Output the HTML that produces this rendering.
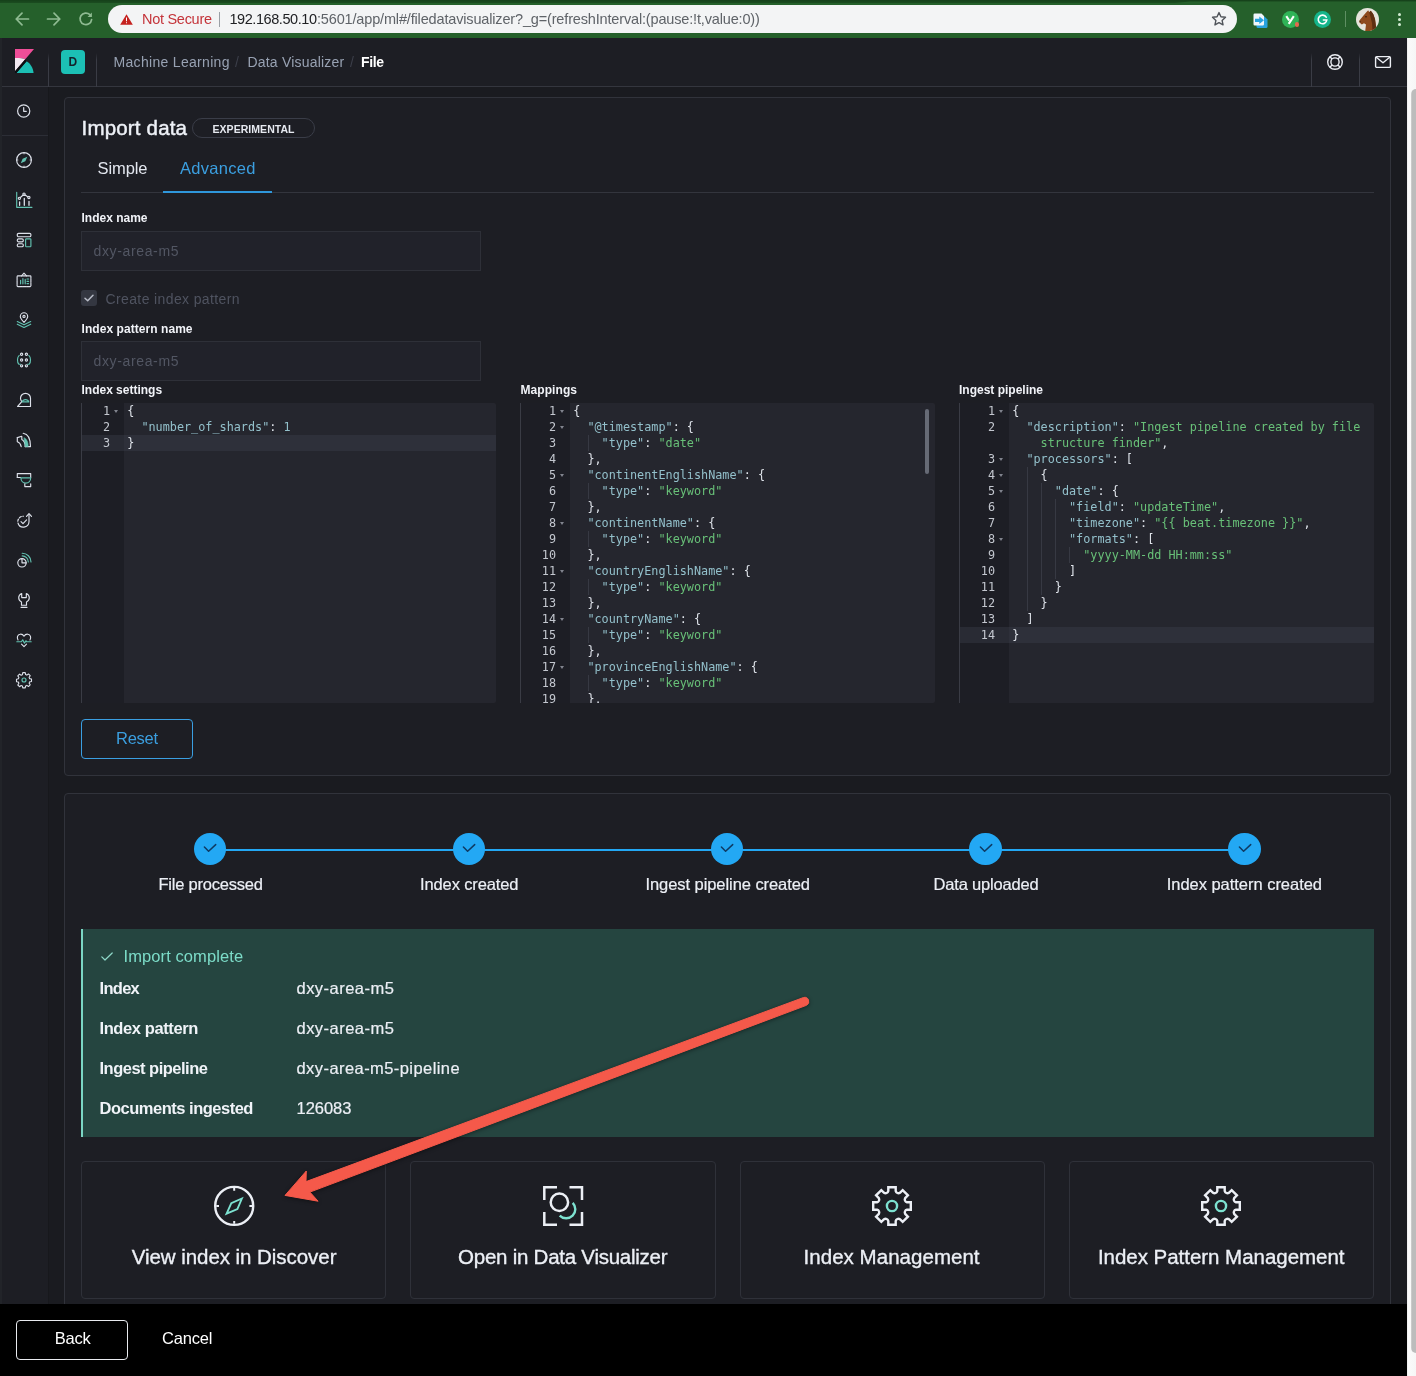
<!DOCTYPE html>
<html lang="en"><head>
<meta charset="utf-8">
<title>Kibana - Machine Learning - File Data Visualizer</title>
<style>
*{box-sizing:border-box;margin:0;padding:0}
html,body{width:1416px;height:1376px;overflow:hidden;background:#1a1b20}
body{will-change:transform;position:relative;font-family:"Liberation Sans",sans-serif;color:#dfe5ef;font-size:14px;line-height:1}
.a{position:absolute}
.t{position:absolute;white-space:nowrap;line-height:1}
svg{display:block;overflow:visible}
/* chrome */
#chrome{left:0;top:0;width:1416px;height:38px;background:#25602b}
#chrome .topedge{left:0;top:0;width:1416px;height:3.4px;background:linear-gradient(#15401a,#1b4d20);clip-path:polygon(0 0,100% 0,100% 1.500px,1190px 1.500px,1170px 100%,0 100%)}
#pill{left:108px;top:5px;width:1129px;height:28px;border-radius:14px;background:#f3f4f5}
/* header */
#hdr{left:0;top:38px;width:1407px;height:49px;background:#1d1e24;border-bottom:1px solid #34363e}
.vd{position:absolute;width:1px;background:#2e3038}
/* sidebar */
#side{left:0;top:87px;width:49px;height:1217px;background:#1d1e24;border-right:1px solid #17181c}
.panel{position:absolute;background:#1d1e24;border:1px solid #31333b;border-radius:4px}
#bottom{left:0;top:1303.5px;width:1407px;height:73px;background:#000}
#sb{left:1407px;top:38px;width:9px;height:1338px;background:linear-gradient(90deg,#ececec,#fafafa 1.500px,#f6f6f6)}
#sbt{left:1411px;top:89px;width:10px;height:1263.500px;background:linear-gradient(90deg,#d0d0d0,#bcbcbc 1.500px);border-radius:5px}
.ed{background:#25262e;overflow:hidden;border-left:1px solid #3a3c45;border-radius:0 2px 2px 0}
.gut{background:#1d1e25}
.ln{font-size:11.8px;color:#c3c7cf}
.cl{font-size:11.8px;color:#dfe3ea;white-space:pre}
.mono{font-family:"DejaVu Sans Mono","Liberation Mono",monospace}
.fold{width:0;height:0;border-left:2.900px solid transparent;border-right:2.900px solid transparent;border-top:3.500px solid #81848e}
.inp{background:#21222a;border:1px solid #2e3038;border-radius:0}
</style>
</head>
<body>
<!-- ============ browser chrome ============ -->
<div id="chrome" class="a">
  <div class="a topedge"></div>
  <!-- back / forward / reload -->
  <svg class="a" style="left:14px;top:11px" width="16" height="16" viewBox="0 0 16 16" fill="none" stroke="#8fbb92" stroke-width="1.7" stroke-linecap="round" stroke-linejoin="round"><path d="M14.5 8H2.2M8 2.2L2.2 8 8 13.8"></path></svg>
  <svg class="a" style="left:46px;top:11px" width="16" height="16" viewBox="0 0 16 16" fill="none" stroke="#8fbb92" stroke-width="1.7" stroke-linecap="round" stroke-linejoin="round"><path d="M1.5 8h12.3M8 2.2L13.8 8 8 13.8"></path></svg>
  <svg class="a" style="left:78px;top:11px" width="16" height="16" viewBox="0 0 16 16" fill="none" stroke="#8fbb92" stroke-width="1.7" stroke-linecap="round" stroke-linejoin="round"><path d="M13.6 8.6A5.8 5.8 0 1 1 11.9 3.7"></path><path d="M13.9 1.6v4.3H9.6z" fill="#8fbb92" stroke="none"></path></svg>
  <div id="pill" class="a"></div>
  <svg class="a" style="left:120px;top:14px" width="13" height="11" viewBox="0 0 13 11"><path d="M6.5 0.3L12.8 10.7H0.2z" fill="#c5221f"></path><path d="M6 3.6h1v3.6H6zM6 8.2h1v1.1H6z" fill="#fff"></path></svg>
  <span class="t" style="left: 142px; top: 12px; font-size: 14.5px; color: rgb(196, 52, 58); letter-spacing: -0.28px;">Not Secure</span>
  <div class="a" style="left:219px;top:12px;width:1px;height:15px;background:#9aa0a6"></div>
  <span class="t" style="left: 229.5px; top: 12px; font-size: 14.5px; color: rgb(32, 33, 36); letter-spacing: -0.44px;">192.168.50.10</span>
  <span class="t" style="left: 317px; top: 12px; font-size: 14.5px; color: rgb(95, 99, 104); letter-spacing: -0.16px;">:5601/app/ml#/filedatavisualizer?_g=(refreshInterval:(pause:!t,value:0))</span>
  <!-- star -->
  <svg class="a" style="left:1211px;top:11px" width="16" height="16" viewBox="0 0 16 16" fill="none" stroke="#50545a" stroke-width="1.4" stroke-linejoin="round"><path d="M8 1.6l1.95 4.2 4.55.5-3.4 3.1.95 4.5L8 11.6l-4.05 2.3.95-4.5-3.4-3.1 4.55-.5z"></path></svg>
  <!-- extension icons -->
  <svg class="a" style="left:1253px;top:12.500px" width="15" height="16" viewBox="0 0 15 16"><path d="M3.500 3.500h8l3 3v7a1.500 1.500 0 0 1-1.500 1.500H5a1.500 1.500 0 0 1-1.500-1.500z" fill="#27a3de"></path><path d="M.5 1.700A1.200 1.200 0 0 1 1.700.5h6.800l2.500 2.500v8.300a1.200 1.200 0 0 1-1.200 1.200H1.700a1.200 1.200 0 0 1-1.200-1.200z" fill="#eef6fb"></path><path d="M2 5.700h4.300V3.600l4.700 3.700-4.700 3.700V8.900H2z" fill="#27a3de"></path></svg>
  <div class="a" style="left:1282px;top:11px;width:17px;height:17px;border-radius:50%;background:#2fb457"></div>
  <svg class="a" style="left:1284px;top:13px" width="13" height="13" viewBox="0 0 13 13" fill="none" stroke="#fff" stroke-width="2.100" stroke-linecap="butt"><path d="M2.300 3.200l2.900 4.300M9.800 3.200L4.700 10.800"></path></svg>
  <div class="a" style="left:1294.500px;top:22px;width:4.600px;height:4.600px;border-radius:50%;background:#e36a4e"></div>
  <div class="a" style="left:1314px;top:11px;width:17px;height:17px;border-radius:50%;background:#15b58b"></div>
  <svg class="a" style="left:1317px;top:14px" width="11" height="11" viewBox="0 0 11 11" fill="none" stroke="#fff" stroke-width="1.6" stroke-linecap="round"><path d="M9.2 3.2A4.3 4.3 0 1 0 9.8 6H6.4"></path></svg>
  <div class="a" style="left:1345px;top:11px;width:1px;height:16px;background:#5f8f63"></div>
  <!-- avatar -->
  <div class="a" style="left:1356px;top:8px;width:23px;height:23px;border-radius:50%;background:#e6e4dc;overflow:hidden">
    <svg width="23" height="23" viewBox="0 0 23 23"><path d="M12.200 2.200l1 2.100 1.600-1.500 2.400 3.200 1.800 5 .8 6 .7 6H9.200l.8-6.500-2-1.300-2.200 1.400-2.600-2.300.4-2.100 3.900-4.700 2.800-3.300z" fill="#8e4a1d"></path><path d="M14.800 2.800l2.400 3.200 1.800 5 .8 6 .7 6h-4l-.5-8-1.500-6-1.300-4.700z" fill="#5e2f12"></path><circle cx="10" cy="8.700" r=".8" fill="#2a1508"></circle><path d="M3.400 13.200l1.400.6" stroke="#2a1508" stroke-width=".7"></path></svg>
  </div>
  <!-- menu dots -->
  <div class="a" style="left:1398px;top:13px;width:3.4px;height:3.4px;border-radius:50%;background:#d2ebd2"></div>
  <div class="a" style="left:1398px;top:18px;width:3.4px;height:3.4px;border-radius:50%;background:#d2ebd2"></div>
  <div class="a" style="left:1398px;top:23px;width:3.4px;height:3.4px;border-radius:50%;background:#d2ebd2"></div>
</div>

<!-- ============ kibana header ============ -->
<div id="hdr" class="a">
  <!-- kibana logo -->
  <svg class="a" style="left:15px;top:11px" width="19" height="24" viewBox="0 0 19 24"><path d="M0 0h19L10.3 10.2C7.5 9.2 3.5 8.8 0 9z" fill="#f04e98"></path><path d="M0 9c3.500-.2 7.500.2 10.300 1.200L0 22.300z" fill="#f3e9f1"></path><path d="M11.600 12.200C15.500 14.500 18.200 19 18.600 24H1.400z" fill="#1cbfb4"></path><path d="M19 0L0 22.300V24h1.400L11.600 12.200 10.300 10.200z" fill="#0d0e12"></path></svg>
  <div class="vd" style="left:48px;top:15px;height:34px;background:linear-gradient(rgba(52,54,62,0),#3a3c45 20%)"></div>
  <div class="vd" style="left:96px;top:15px;height:34px;background:linear-gradient(rgba(52,54,62,0),#3a3c45 20%)"></div>
  <div class="a" style="left:61px;top:12px;width:24px;height:24px;border-radius:4px;background:#1cc0b5"></div>
  <span class="t" style="left:68.500px;top:18px;font-size:12px;font-weight:bold;color:#14222b">D</span>
  <span class="t" style="left: 113.5px; top: 17px; font-size: 14px; color: rgb(152, 162, 179); letter-spacing: 0.31px;">Machine Learning</span>
  <span class="t" style="left:235px;top:17px;font-size:14px;color:#3c3f4a">/</span>
  <span class="t" style="left: 247.5px; top: 17px; font-size: 14px; color: rgb(152, 162, 179); letter-spacing: 0.19px;">Data Visualizer</span>
  <span class="t" style="left:350px;top:17px;font-size:14px;color:#3c3f4a">/</span>
  <span class="t" style="left: 361px; top: 17px; font-size: 14px; font-weight: bold; color: rgb(255, 255, 255); letter-spacing: -0.37px;">File</span>
  <div class="vd" style="left:1311px;top:15px;height:34px;background:linear-gradient(rgba(52,54,62,0),#3a3c45 20%)"></div>
  <div class="vd" style="left:1359px;top:15px;height:34px;background:linear-gradient(rgba(52,54,62,0),#3a3c45 20%)"></div>
  <!-- help -->
  <svg class="a" style="left:1327px;top:16px" width="16" height="16" viewBox="0 0 16 16" fill="none" stroke="#eceef4" stroke-width="1.400"><circle cx="8" cy="8" r="7.300"></circle><circle cx="8" cy="8" r="4.100"></circle><path d="M2.800 2.800l2.300 2.300M13.200 2.800l-2.300 2.300M2.800 13.200l2.300-2.300M13.200 13.200l-2.300-2.300"></path></svg>
  <!-- mail -->
  <svg class="a" style="left:1375px;top:18px" width="16" height="12" viewBox="0 0 16 12" fill="none" stroke="#eceef4" stroke-width="1.400" stroke-linejoin="round"><rect x=".6" y=".6" width="14.800" height="10.800" rx="1.200"></rect><path d="M1 1l7 5.800L15 1"></path></svg>
</div>

<!-- ============ sidebar ============ -->
<div id="side" class="a">
  <svg class="a" style="left:16px;top:15.5px" width="16" height="16" viewBox="0 0 16 16" fill="none" stroke="#dde1ea" stroke-width="1.2" stroke-linecap="round" stroke-linejoin="round"><circle cx="7.7" cy="8" r="6.1"></circle><path d="M7.7 4.6V8.300h2.600"></path></svg>
  <div class="a" style="left:0;top:48px;width:48px;height:1px;background:#2c2e36"></div>
  <svg class="a" style="left:16px;top:65px" width="16" height="16" viewBox="0 0 16 16" fill="none" stroke="#dde1ea" stroke-width="1.15" stroke-linecap="round" stroke-linejoin="round"><circle cx="8" cy="8" r="7.4"></circle><path d="M11.300 4.700L9.300 9.300 4.700 11.300 6.700 6.700z" fill="#62c2b1" stroke="none"></path><path d="M8 .6v1.300M8 14.100v1.300M.6 8h1.300M14.100 8h1.300" stroke-width=".9"></path></svg>
  <svg class="a" style="left:16px;top:105px" width="16" height="16" viewBox="0 0 16 16" fill="none" stroke="#dde1ea" stroke-width="1.15" stroke-linecap="round" stroke-linejoin="round"><path d="M.7.300V15.300H16" stroke="#62c2b1"></path><path d="M3.500 6.200L8 2.200l4.800 3.200"></path><circle cx="3.400" cy="6.300" r="1.100" fill="#1d1e24"></circle><circle cx="8" cy="2.100" r="1.100" fill="#1d1e24"></circle><circle cx="12.900" cy="5.500" r="1.100" fill="#1d1e24"></circle><path d="M3.600 10v3.300M8.300 6.500v6.800M13 9.300v4" stroke-width="1.300"></path></svg>
  <svg class="a" style="left:16px;top:145px" width="16" height="16" viewBox="0 0 16 16" fill="none" stroke="#dde1ea" stroke-width="1.15" stroke-linecap="round" stroke-linejoin="round"><rect x="1.300" y="1.300" width="13.600" height="3.400" rx="1.300"></rect><rect x="1.300" y="6.800" width="6" height="3" rx="1.300"></rect><rect x="1.300" y="11.700" width="6" height="3" rx="1.300"></rect><rect x="9.600" y="6.800" width="5.300" height="7.900" rx=".8" stroke="#62c2b1"></rect></svg>
  <svg class="a" style="left:16px;top:185px" width="16" height="16" viewBox="0 0 16 16" fill="none" stroke="#dde1ea" stroke-width="1.15" stroke-linecap="round" stroke-linejoin="round"><path d="M5.500 3.800L8 1.200l2.500 2.600"></path><rect x="1.100" y="3.800" width="13.800" height="10.800" rx=".8" stroke-dasharray="3.200 .7"></rect><path d="M4.600 11.800V8.200M6.900 11.800V6.600M9.200 11.800V7.400" stroke="#62c2b1"></path><path d="M11 7h1.600M11 9.300h1.600M11 11.600h1.600" stroke="#62c2b1"></path></svg>
  <svg class="a" style="left:16px;top:225px" width="16" height="16" viewBox="0 0 16 16" fill="none" stroke="#dde1ea" stroke-width="1.15" stroke-linecap="round" stroke-linejoin="round"><path d="M8 10.300C5.300 7.300 4.300 5.900 4.300 4.400a3.700 3.700 0 0 1 7.400 0c0 1.500-1 2.900-3.700 5.900z"></path><circle cx="8" cy="4.400" r="1.100"></circle><path d="M1.300 9.600L8 12.800l6.700-3.200M1.300 12.200L8 15.400l6.700-3.200" stroke="#62c2b1"></path></svg>
  <svg class="a" style="left:16px;top:265px" width="16" height="16" viewBox="0 0 16 16" fill="none" stroke="#dde1ea" stroke-width="1.15" stroke-linecap="round" stroke-linejoin="round"><circle cx="5.600" cy="2.200" r="1.100"></circle><circle cx="10.400" cy="2.200" r="1.100"></circle><circle cx="5.600" cy="8" r="1.100"></circle><circle cx="10.400" cy="8" r="1.100"></circle><circle cx="5.600" cy="13.800" r="1.100"></circle><circle cx="10.400" cy="13.800" r="1.100"></circle><path d="M3.200 3.400C1 5.200 1 10.200 2.800 12.200h1.800M12.800 3.400c2.200 1.800 2.200 6.800.4 8.800h-1.800" stroke="#62c2b1"></path></svg>
  <svg class="a" style="left:16px;top:305px" width="16" height="16" viewBox="0 0 16 16" fill="none" stroke="#dde1ea" stroke-width="1.15" stroke-linecap="round" stroke-linejoin="round"><path d="M1.600 14.500h12.900V6.300a5 5 0 0 0-10 0c0 1.300.5 2.500 1.300 3.400L1.600 14.500z"></path><path d="M6.200 9.900c.9-3.100 5.700-3.100 6.600 0z" stroke="#62c2b1"></path></svg>
  <svg class="a" style="left:16px;top:345px" width="16" height="16" viewBox="0 0 16 16" fill="none" stroke="#dde1ea" stroke-width="1.15" stroke-linecap="round" stroke-linejoin="round"><path d="M7.200 1.300c4.200.6 7.300 5.300 7.300 13.300H9.200"></path><path d="M1.300 5.600l4.500-1.300v3.300c2 1 3.400 3.300 3.400 7"></path><path d="M1.300 5.600v4.200c1.600.5 3.400 1.800 3.900 4.800"></path><path d="M8.300 5.800c2.600 1.400 3.900 4.500 3.900 8.800H9.200c0-3-.4-5-1-6.200z" fill="#62c2b1" stroke="#62c2b1" stroke-width=".6"></path></svg>
  <svg class="a" style="left:16px;top:385px" width="16" height="16" viewBox="0 0 16 16" fill="none" stroke="#dde1ea" stroke-width="1.15" stroke-linecap="round" stroke-linejoin="round"><path d="M1.300 5.500V1.600h13.400v4"></path><path d="M1.300 5.500h3.200"></path><path d="M4.900 5.800h9.800c0 3-2.100 5.300-4.900 5.300S4.900 8.800 4.900 5.800z" stroke="#62c2b1"></path><path d="M8.800 11.800v2.800h5.900v-2.800"></path></svg>
  <svg class="a" style="left:16px;top:425px" width="16" height="16" viewBox="0 0 16 16" fill="none" stroke="#dde1ea" stroke-width="1.15" stroke-linecap="round" stroke-linejoin="round"><path d="M13 2.200v7.600A5.600 5.600 0 0 1 2 11"></path><path d="M1.800 9.200a5.600 5.600 0 0 1 5.600-5" stroke-dasharray="2.200 1.500"></path><path d="M10.500 4.400L13 1.600l2.500 2.800"></path><path d="M5 9.600l2 2 3.600-3.800"></path></svg>
  <svg class="a" style="left:16px;top:465px" width="16" height="16" viewBox="0 0 16 16" fill="none" stroke="#dde1ea" stroke-width="1.15" stroke-linecap="round" stroke-linejoin="round"><path d="M6.200 1.200a8.800 8.800 0 0 1 8.800 8.800M6.200 3.900a6.100 6.100 0 0 1 6.100 6.100" stroke="#62c2b1"></path><path d="M6 6.600A4.200 4.200 0 1 0 10.200 10.800H6z"></path><path d="M6 6.600a4.200 4.200 0 0 1 4.200 4.200"></path></svg>
  <svg class="a" style="left:16px;top:505px" width="16" height="16" viewBox="0 0 16 16" fill="none" stroke="#dde1ea" stroke-width="1.15" stroke-linecap="round" stroke-linejoin="round"><path d="M5.700 1.500v4.100h4.600V1.500c1.800.8 3 2.400 3 4.300 0 1.800-1.100 3.300-2.800 4.100v3.300H5.500V9.900C3.800 9.100 2.700 7.600 2.700 5.800c0-1.900 1.200-3.500 3-4.300z"></path><path d="M5 15.300h6"></path></svg>
  <svg class="a" style="left:16px;top:545px" width="16" height="16" viewBox="0 0 16 16" fill="none" stroke="#dde1ea" stroke-width="1.15" stroke-linecap="round" stroke-linejoin="round"><path d="M8 14.600l-2.500-2.400M8 14.600l2.500-2.400M2 8C.6 5.600 1.400 2.600 4.200 2.200 6 2 7.300 3 8 4.200 8.700 3 10 2 11.800 2.200 14.600 2.600 15.400 5.600 14 8"></path><path d="M.8 9.700h4.600l1.300-1.900 1.800 3.300 1.500-2.400.6 1h4.600" stroke="#62c2b1"></path></svg>
  <svg class="a" style="left:16px;top:585px" width="16" height="16" viewBox="0 0 16 16" fill="none" stroke="#dde1ea" stroke-width="1.15" stroke-linecap="round" stroke-linejoin="round"><path d="M6.700 1h2.600l.4 2 1.300.6 1.700-1.200 1.800 1.800-1.100 1.800.5 1.300 2 .4v2.600l-2 .4-.5 1.300 1.100 1.800-1.800 1.800-1.700-1.200-1.300.6-.4 2H6.700l-.4-2L5 14.600l-1.700 1.200-1.800-1.800 1.100-1.800-.5-1.300-2-.4V7.900l2-.4.5-1.300-1.100-1.800 1.800-1.800L5 3.800 6.300 3.200z" transform="translate(.4 -.3) scale(.95)"></path><circle cx="8" cy="8" r="2" stroke="#62c2b1" stroke-width="1.150"></circle></svg>
</div>

<div id="ledge" class="a" style="left:0;top:38px;width:2px;height:1266px;background:#222429"></div>
<!-- ============ panel 1 ============ -->
<div class="panel" id="p1" style="left:64px;top:97px;width:1327px;height:679px"></div>
<span class="t" style="left: 81.5px; top: 118px; font-size: 20.5px; color: rgb(238, 241, 247); -webkit-text-stroke: 0.45px rgb(238, 241, 247); letter-spacing: 0.18px;">Import data</span>
<div class="a" style="left:192px;top:118px;width:123px;height:20px;border:1px solid #3a3d48;border-radius:10px"></div>
<span class="t" style="left: 212.5px; top: 123.5px; font-size: 10.5px; font-weight: bold; color: rgb(230, 233, 240); letter-spacing: 0.05px;">EXPERIMENTAL</span>
<span class="t" style="left: 97.5px; top: 160px; font-size: 16.5px; color: rgb(227, 231, 239); letter-spacing: -0.09px;">Simple</span>
<span class="t" style="left: 180px; top: 160px; font-size: 16.5px; color: rgb(59, 159, 224); letter-spacing: 0.3px;">Advanced</span>
<div class="a" style="left:81px;top:192px;width:1293px;height:1px;background:#33353d"></div>
<div class="a" style="left:163px;top:190.500px;width:109px;height:2px;background:#2f97db"></div>

<span class="t" style="left: 81.5px; top: 212px; font-size: 12px; font-weight: bold; color: rgb(241, 243, 248); letter-spacing: 0px;">Index name</span>
<div class="a inp" style="left:81px;top:231px;width:400px;height:40px"></div>
<span class="t" style="left: 93.5px; top: 244px; font-size: 14px; color: rgb(82, 86, 99); letter-spacing: 0.64px;">dxy-area-m5</span>
<div class="a" style="left:81px;top:290px;width:16px;height:16px;border-radius:3px;background:#343741"></div>
<svg class="a" style="left:84px;top:294px" width="10" height="8" viewBox="0 0 10 8" fill="none" stroke="#b9bdc8" stroke-width="1.500" stroke-linecap="round" stroke-linejoin="round"><path d="M1 4.200L3.700 6.800 9 1.200"></path></svg>
<span class="t" style="left: 105.5px; top: 292px; font-size: 14px; color: rgb(79, 83, 96); letter-spacing: 0.38px;">Create index pattern</span>
<span class="t" style="left: 81.5px; top: 322.5px; font-size: 12px; font-weight: bold; color: rgb(241, 243, 248); letter-spacing: 0.06px;">Index pattern name</span>
<div class="a inp" style="left:81px;top:341px;width:400px;height:40px"></div>
<span class="t" style="left: 93.5px; top: 354px; font-size: 14px; color: rgb(82, 86, 99); letter-spacing: 0.64px;">dxy-area-m5</span>
<span class="t" style="left: 81.5px; top: 384px; font-size: 12px; font-weight: bold; color: rgb(241, 243, 248); letter-spacing: -0.01px;">Index settings</span>
<span class="t" style="left: 520.5px; top: 384px; font-size: 12px; font-weight: bold; color: rgb(241, 243, 248); letter-spacing: 0.07px;">Mappings</span>
<span class="t" style="left: 959px; top: 384px; font-size: 12px; font-weight: bold; color: rgb(241, 243, 248); letter-spacing: 0px;">Ingest pipeline</span>
<div class="a ed" style="left:81px;top:403px;width:415px;height:300px">
 <div class="a gut" style="left:0;top:0;width:42px;height:300px"></div>
 <div class="a" style="left:0;top:32px;width:415px;height:16px;background:#2e303a"></div>
 <div class="a" style="left:0;top:32px;width:42px;height:16px;background:#292b34"></div>
 <span class="t mono ln" style="right:386px;top:3.1px">1</span>
 <div class="a fold" style="left:32.2px;top:6.6px"></div>
 <span class="t mono cl" style="left:45.2px;top:3.1px">{</span>
 <span class="t mono ln" style="right:386px;top:19.1px">2</span>
 <span class="t mono cl" style="left:45.2px;top:19.1px">  <span style="color:#93c0cb">"number_of_shards"</span>: <span style="color:#93c0cb">1</span></span>
 <span class="t mono ln" style="right:386px;top:35.1px">3</span>
 <span class="t mono cl" style="left:45.2px;top:35.1px">}</span>
</div>
<div class="a ed" style="left:520px;top:403px;width:415px;height:300px">
 <div class="a gut" style="left:0;top:0;width:49px;height:300px"></div>
 <div class="a" style="left:0;top:-80px;width:415px;height:16px;background:#2e303a"></div>
 <div class="a" style="left:0;top:-80px;width:49px;height:16px;background:#292b34"></div>
 <div class="a" style="left:66.7px;top:32px;width:1px;height:16px;background:#373943"></div>
 <div class="a" style="left:66.7px;top:80px;width:1px;height:16px;background:#373943"></div>
 <div class="a" style="left:66.7px;top:128px;width:1px;height:16px;background:#373943"></div>
 <div class="a" style="left:66.7px;top:176px;width:1px;height:16px;background:#373943"></div>
 <div class="a" style="left:66.7px;top:224px;width:1px;height:16px;background:#373943"></div>
 <div class="a" style="left:66.7px;top:272px;width:1px;height:16px;background:#373943"></div>
 <span class="t mono ln" style="right:379px;top:3.1px">1</span>
 <div class="a fold" style="left:39.2px;top:6.6px"></div>
 <span class="t mono cl" style="left:52.2px;top:3.1px">{</span>
 <span class="t mono ln" style="right:379px;top:19.1px">2</span>
 <div class="a fold" style="left:39.2px;top:22.6px"></div>
 <span class="t mono cl" style="left:52.2px;top:19.1px">  <span style="color:#93c0cb">"@timestamp"</span>: {</span>
 <span class="t mono ln" style="right:379px;top:35.1px">3</span>
 <span class="t mono cl" style="left:52.2px;top:35.1px">    <span style="color:#93c0cb">"type"</span>: <span style="color:#68c078">"date"</span></span>
 <span class="t mono ln" style="right:379px;top:51.1px">4</span>
 <span class="t mono cl" style="left:52.2px;top:51.1px">  },</span>
 <span class="t mono ln" style="right:379px;top:67.1px">5</span>
 <div class="a fold" style="left:39.2px;top:70.6px"></div>
 <span class="t mono cl" style="left:52.2px;top:67.1px">  <span style="color:#93c0cb">"continentEnglishName"</span>: {</span>
 <span class="t mono ln" style="right:379px;top:83.1px">6</span>
 <span class="t mono cl" style="left:52.2px;top:83.1px">    <span style="color:#93c0cb">"type"</span>: <span style="color:#68c078">"keyword"</span></span>
 <span class="t mono ln" style="right:379px;top:99.1px">7</span>
 <span class="t mono cl" style="left:52.2px;top:99.1px">  },</span>
 <span class="t mono ln" style="right:379px;top:115.1px">8</span>
 <div class="a fold" style="left:39.2px;top:118.6px"></div>
 <span class="t mono cl" style="left:52.2px;top:115.1px">  <span style="color:#93c0cb">"continentName"</span>: {</span>
 <span class="t mono ln" style="right:379px;top:131.1px">9</span>
 <span class="t mono cl" style="left:52.2px;top:131.1px">    <span style="color:#93c0cb">"type"</span>: <span style="color:#68c078">"keyword"</span></span>
 <span class="t mono ln" style="right:379px;top:147.1px">10</span>
 <span class="t mono cl" style="left:52.2px;top:147.1px">  },</span>
 <span class="t mono ln" style="right:379px;top:163.1px">11</span>
 <div class="a fold" style="left:39.2px;top:166.6px"></div>
 <span class="t mono cl" style="left:52.2px;top:163.1px">  <span style="color:#93c0cb">"countryEnglishName"</span>: {</span>
 <span class="t mono ln" style="right:379px;top:179.1px">12</span>
 <span class="t mono cl" style="left:52.2px;top:179.1px">    <span style="color:#93c0cb">"type"</span>: <span style="color:#68c078">"keyword"</span></span>
 <span class="t mono ln" style="right:379px;top:195.1px">13</span>
 <span class="t mono cl" style="left:52.2px;top:195.1px">  },</span>
 <span class="t mono ln" style="right:379px;top:211.1px">14</span>
 <div class="a fold" style="left:39.2px;top:214.6px"></div>
 <span class="t mono cl" style="left:52.2px;top:211.1px">  <span style="color:#93c0cb">"countryName"</span>: {</span>
 <span class="t mono ln" style="right:379px;top:227.1px">15</span>
 <span class="t mono cl" style="left:52.2px;top:227.1px">    <span style="color:#93c0cb">"type"</span>: <span style="color:#68c078">"keyword"</span></span>
 <span class="t mono ln" style="right:379px;top:243.1px">16</span>
 <span class="t mono cl" style="left:52.2px;top:243.1px">  },</span>
 <span class="t mono ln" style="right:379px;top:259.1px">17</span>
 <div class="a fold" style="left:39.2px;top:262.6px"></div>
 <span class="t mono cl" style="left:52.2px;top:259.1px">  <span style="color:#93c0cb">"provinceEnglishName"</span>: {</span>
 <span class="t mono ln" style="right:379px;top:275.1px">18</span>
 <span class="t mono cl" style="left:52.2px;top:275.1px">    <span style="color:#93c0cb">"type"</span>: <span style="color:#68c078">"keyword"</span></span>
 <span class="t mono ln" style="right:379px;top:291.1px">19</span>
 <span class="t mono cl" style="left:52.2px;top:291.1px">  },</span>
 <div class="a" style="left:404px;top:5.7px;width:4.2px;height:65px;background:#666a75;border-radius:2px"></div>
</div>
<div class="a ed" style="left:959px;top:403px;width:415px;height:300px">
 <div class="a gut" style="left:0;top:0;width:49px;height:300px"></div>
 <div class="a" style="left:0;top:224px;width:415px;height:16px;background:#2e303a"></div>
 <div class="a" style="left:0;top:224px;width:49px;height:16px;background:#292b34"></div>
 <div class="a" style="left:66.7px;top:64px;width:1px;height:16px;background:#373943"></div>
 <div class="a" style="left:66.7px;top:80px;width:1px;height:16px;background:#373943"></div>
 <div class="a" style="left:66.7px;top:96px;width:1px;height:16px;background:#373943"></div>
 <div class="a" style="left:66.7px;top:112px;width:1px;height:16px;background:#373943"></div>
 <div class="a" style="left:66.7px;top:128px;width:1px;height:16px;background:#373943"></div>
 <div class="a" style="left:66.7px;top:144px;width:1px;height:16px;background:#373943"></div>
 <div class="a" style="left:66.7px;top:160px;width:1px;height:16px;background:#373943"></div>
 <div class="a" style="left:66.7px;top:176px;width:1px;height:16px;background:#373943"></div>
 <div class="a" style="left:66.7px;top:192px;width:1px;height:16px;background:#373943"></div>
 <div class="a" style="left:80.9px;top:80px;width:1px;height:16px;background:#373943"></div>
 <div class="a" style="left:80.9px;top:96px;width:1px;height:16px;background:#373943"></div>
 <div class="a" style="left:80.9px;top:112px;width:1px;height:16px;background:#373943"></div>
 <div class="a" style="left:80.9px;top:128px;width:1px;height:16px;background:#373943"></div>
 <div class="a" style="left:80.9px;top:144px;width:1px;height:16px;background:#373943"></div>
 <div class="a" style="left:80.9px;top:160px;width:1px;height:16px;background:#373943"></div>
 <div class="a" style="left:80.9px;top:176px;width:1px;height:16px;background:#373943"></div>
 <div class="a" style="left:95.1px;top:96px;width:1px;height:16px;background:#373943"></div>
 <div class="a" style="left:95.1px;top:112px;width:1px;height:16px;background:#373943"></div>
 <div class="a" style="left:95.1px;top:128px;width:1px;height:16px;background:#373943"></div>
 <div class="a" style="left:95.1px;top:144px;width:1px;height:16px;background:#373943"></div>
 <div class="a" style="left:95.1px;top:160px;width:1px;height:16px;background:#373943"></div>
 <div class="a" style="left:109.3px;top:144px;width:1px;height:16px;background:#373943"></div>
 <span class="t mono ln" style="right:379px;top:3.1px">1</span>
 <div class="a fold" style="left:39.2px;top:6.6px"></div>
 <span class="t mono cl" style="left:52.2px;top:3.1px">{</span>
 <span class="t mono ln" style="right:379px;top:19.1px">2</span>
 <span class="t mono cl" style="left:52.2px;top:19.1px">  <span style="color:#93c0cb">"description"</span>: <span style="color:#68c078">"Ingest pipeline created by file</span></span>
 <span class="t mono cl" style="left:52.2px;top:35.1px">    <span style="color:#68c078">structure finder"</span>,</span>
 <span class="t mono ln" style="right:379px;top:51.1px">3</span>
 <div class="a fold" style="left:39.2px;top:54.6px"></div>
 <span class="t mono cl" style="left:52.2px;top:51.1px">  <span style="color:#93c0cb">"processors"</span>: [</span>
 <span class="t mono ln" style="right:379px;top:67.1px">4</span>
 <div class="a fold" style="left:39.2px;top:70.6px"></div>
 <span class="t mono cl" style="left:52.2px;top:67.1px">    {</span>
 <span class="t mono ln" style="right:379px;top:83.1px">5</span>
 <div class="a fold" style="left:39.2px;top:86.6px"></div>
 <span class="t mono cl" style="left:52.2px;top:83.1px">      <span style="color:#93c0cb">"date"</span>: {</span>
 <span class="t mono ln" style="right:379px;top:99.1px">6</span>
 <span class="t mono cl" style="left:52.2px;top:99.1px">        <span style="color:#93c0cb">"field"</span>: <span style="color:#68c078">"updateTime"</span>,</span>
 <span class="t mono ln" style="right:379px;top:115.1px">7</span>
 <span class="t mono cl" style="left:52.2px;top:115.1px">        <span style="color:#93c0cb">"timezone"</span>: <span style="color:#68c078">"{{ beat.timezone }}"</span>,</span>
 <span class="t mono ln" style="right:379px;top:131.1px">8</span>
 <div class="a fold" style="left:39.2px;top:134.6px"></div>
 <span class="t mono cl" style="left:52.2px;top:131.1px">        <span style="color:#93c0cb">"formats"</span>: [</span>
 <span class="t mono ln" style="right:379px;top:147.1px">9</span>
 <span class="t mono cl" style="left:52.2px;top:147.1px">          <span style="color:#68c078">"yyyy-MM-dd HH:mm:ss"</span></span>
 <span class="t mono ln" style="right:379px;top:163.1px">10</span>
 <span class="t mono cl" style="left:52.2px;top:163.1px">        ]</span>
 <span class="t mono ln" style="right:379px;top:179.1px">11</span>
 <span class="t mono cl" style="left:52.2px;top:179.1px">      }</span>
 <span class="t mono ln" style="right:379px;top:195.1px">12</span>
 <span class="t mono cl" style="left:52.2px;top:195.1px">    }</span>
 <span class="t mono ln" style="right:379px;top:211.1px">13</span>
 <span class="t mono cl" style="left:52.2px;top:211.1px">  ]</span>
 <span class="t mono ln" style="right:379px;top:227.1px">14</span>
 <span class="t mono cl" style="left:52.2px;top:227.1px">}</span>
</div>

<div class="a" style="left:81px;top:719px;width:112px;height:40px;border:1px solid #3a9fe2;border-radius:4px"></div>
<span class="t" style="left: 116px; top: 730px; font-size: 16.5px; color: rgb(59, 159, 224); letter-spacing: -0.28px;">Reset</span>

<!-- ============ panel 2 ============ -->
<div class="panel" id="p2" style="left:64px;top:792.500px;width:1327px;height:540px"></div>
<div class="a" style="left:210px;top:848.9px;width:1034.5px;height:2.2px;background:#23a8f4"></div>
<div class="a" style="left:193.8px;top:832.8px;width:32.4px;height:32.4px;border-radius:50%;background:#23a8f4"></div>
<svg class="a" style="left:204px;top:844px" width="12" height="8" viewBox="0 0 12 8" fill="none" stroke="#0f3a63" stroke-width="1.500" stroke-linecap="round" stroke-linejoin="round"><path d="M.4 3L4.600 7.200 11.700.6"></path></svg>
<span class="t" style="left: 158.5px; top: 875.5px; font-size: 16.5px; color: rgb(236, 239, 245); -webkit-text-stroke: 0.2px rgb(236, 239, 245); letter-spacing: -0.22px;">File processed</span>
<div class="a" style="left:452.8px;top:832.8px;width:32.4px;height:32.4px;border-radius:50%;background:#23a8f4"></div>
<svg class="a" style="left:463px;top:844px" width="12" height="8" viewBox="0 0 12 8" fill="none" stroke="#0f3a63" stroke-width="1.500" stroke-linecap="round" stroke-linejoin="round"><path d="M.4 3L4.600 7.200 11.700.6"></path></svg>
<span class="t" style="left: 420px; top: 875.5px; font-size: 16.5px; color: rgb(236, 239, 245); -webkit-text-stroke: 0.2px rgb(236, 239, 245); letter-spacing: -0.12px;">Index created</span>
<div class="a" style="left:710.8px;top:832.8px;width:32.4px;height:32.4px;border-radius:50%;background:#23a8f4"></div>
<svg class="a" style="left:721px;top:844px" width="12" height="8" viewBox="0 0 12 8" fill="none" stroke="#0f3a63" stroke-width="1.500" stroke-linecap="round" stroke-linejoin="round"><path d="M.4 3L4.600 7.200 11.700.6"></path></svg>
<span class="t" style="left: 645.5px; top: 875.5px; font-size: 16.5px; color: rgb(236, 239, 245); -webkit-text-stroke: 0.2px rgb(236, 239, 245); letter-spacing: -0.07px;">Ingest pipeline created</span>
<div class="a" style="left:969.3px;top:832.8px;width:32.4px;height:32.4px;border-radius:50%;background:#23a8f4"></div>
<svg class="a" style="left:979.5px;top:844px" width="12" height="8" viewBox="0 0 12 8" fill="none" stroke="#0f3a63" stroke-width="1.500" stroke-linecap="round" stroke-linejoin="round"><path d="M.4 3L4.600 7.200 11.700.6"></path></svg>
<span class="t" style="left: 933.5px; top: 875.5px; font-size: 16.5px; color: rgb(236, 239, 245); -webkit-text-stroke: 0.2px rgb(236, 239, 245); letter-spacing: -0.18px;">Data uploaded</span>
<div class="a" style="left:1228.3px;top:832.8px;width:32.4px;height:32.4px;border-radius:50%;background:#23a8f4"></div>
<svg class="a" style="left:1238.5px;top:844px" width="12" height="8" viewBox="0 0 12 8" fill="none" stroke="#0f3a63" stroke-width="1.500" stroke-linecap="round" stroke-linejoin="round"><path d="M.4 3L4.600 7.200 11.700.6"></path></svg>
<span class="t" style="left: 1166.7px; top: 875.5px; font-size: 16.5px; color: rgb(236, 239, 245); -webkit-text-stroke: 0.2px rgb(236, 239, 245); letter-spacing: -0.03px;">Index pattern created</span>
<div class="a" style="left:81px;top:929px;width:1293px;height:208px;background:#254540;border-left:2px solid #7bd6c4"></div>
<svg class="a" style="left:101px;top:951.500px" width="12" height="9" viewBox="0 0 12 9" fill="none" stroke="#8fd9c9" stroke-width="1.2" stroke-linecap="round" stroke-linejoin="round"><path d="M.8 4.800L4 8 11.200 1"></path></svg>
<span class="t" style="left: 123.5px; top: 947.5px; font-size: 16.5px; color: rgb(124, 220, 200); letter-spacing: 0.09px;">Import complete</span>
<span class="t" style="left: 99.5px; top: 979.5px; font-size: 16.5px; font-weight: bold; color: rgb(240, 243, 248); letter-spacing: -0.7px;">Index</span>
<span class="t" style="left: 296.5px; top: 979.5px; font-size: 16.5px; color: rgb(236, 239, 245); -webkit-text-stroke: 0.2px rgb(236, 239, 245); letter-spacing: 0.47px;">dxy-area-m5</span>
<span class="t" style="left: 99.5px; top: 1019.5px; font-size: 16.5px; font-weight: bold; color: rgb(240, 243, 248); letter-spacing: -0.4px;">Index pattern</span>
<span class="t" style="left: 296.5px; top: 1019.5px; font-size: 16.5px; color: rgb(236, 239, 245); -webkit-text-stroke: 0.2px rgb(236, 239, 245); letter-spacing: 0.47px;">dxy-area-m5</span>
<span class="t" style="left: 99.5px; top: 1059.5px; font-size: 16.5px; font-weight: bold; color: rgb(240, 243, 248); letter-spacing: -0.51px;">Ingest pipeline</span>
<span class="t" style="left: 296.5px; top: 1059.5px; font-size: 16.5px; color: rgb(236, 239, 245); -webkit-text-stroke: 0.2px rgb(236, 239, 245); letter-spacing: 0.43px;">dxy-area-m5-pipeline</span>
<span class="t" style="left: 99.5px; top: 1099.5px; font-size: 16.5px; font-weight: bold; color: rgb(240, 243, 248); letter-spacing: -0.49px;">Documents ingested</span>
<span class="t" style="left: 296.5px; top: 1099.5px; font-size: 16.5px; color: rgb(236, 239, 245); -webkit-text-stroke: 0.2px rgb(236, 239, 245); letter-spacing: -0.03px;">126083</span>
<div class="a" style="left:81px;top:1161px;width:305px;height:138px;border:1px solid #2f3139;border-radius:4px;background:#1d1e24"></div>
<span class="t" style="left: 131.7px; top: 1247px; font-size: 20.5px; color: rgb(236, 239, 245); -webkit-text-stroke: 0.35px rgb(236, 239, 245); letter-spacing: -0.05px;">View index in Discover</span>
<div class="a" style="left:410px;top:1161px;width:306px;height:138px;border:1px solid #2f3139;border-radius:4px;background:#1d1e24"></div>
<span class="t" style="left: 458.1px; top: 1247px; font-size: 20.5px; color: rgb(236, 239, 245); -webkit-text-stroke: 0.35px rgb(236, 239, 245); letter-spacing: -0.25px;">Open in Data Visualizer</span>
<div class="a" style="left:740px;top:1161px;width:305px;height:138px;border:1px solid #2f3139;border-radius:4px;background:#1d1e24"></div>
<span class="t" style="left: 803.6px; top: 1247px; font-size: 20.5px; color: rgb(236, 239, 245); -webkit-text-stroke: 0.35px rgb(236, 239, 245); letter-spacing: 0.03px;">Index Management</span>
<div class="a" style="left:1069px;top:1161px;width:305px;height:138px;border:1px solid #2f3139;border-radius:4px;background:#1d1e24"></div>
<span class="t" style="left: 1097.9px; top: 1247px; font-size: 20.5px; color: rgb(236, 239, 245); -webkit-text-stroke: 0.35px rgb(236, 239, 245); letter-spacing: -0.03px;">Index Pattern Management</span>
<svg class="a" style="left:214px;top:1186px" width="40" height="40" viewBox="0 0 40 40" fill="none" stroke="#eceff5" stroke-width="2.400"><circle cx="20.200" cy="19.900" r="19"></circle><path d="M20.200 2v2.700M20.200 35.100v2.700M2.300 19.900h2.700M35.400 19.900h2.700" stroke-width="2"></path><path d="M27.900 12.500L23.400 23.100 12.600 27.700 17.300 17.100z" stroke="#7de2d1" stroke-width="1.900" stroke-linejoin="miter"></path></svg>
<svg class="a" style="left:543px;top:1186px" width="40" height="40" viewBox="0 0 40 40" fill="none" stroke="#eceff5" stroke-width="2.500"><path d="M1.300 14V1.300H14M26.500 1.300H39V14M39 26V38.700H26.500M14 38.700H1.300V26"></path><circle cx="16.400" cy="16.200" r="8.700"></circle><path d="M29.700 16.800A8.900 8.900 0 1 1 16.700 29.600" stroke="#7de2d1" stroke-width="2.400"></path></svg>
<svg class="a" style="left:872.2px;top:1186px" width="40" height="40" viewBox="0 0 40 40" fill="none" stroke="#eceff5" stroke-width="2.4" stroke-linejoin="miter"><path d="M16.30 5.05L16.30 1.20L23.70 1.20L23.70 5.05A2.85 2.85 0 0 0 27.95 6.81L30.68 4.09L35.91 9.32L33.19 12.05A2.85 2.85 0 0 0 34.95 16.30L38.80 16.30L38.80 23.70L34.95 23.70A2.85 2.85 0 0 0 33.19 27.95L35.91 30.68L30.68 35.91L27.95 33.19A2.85 2.85 0 0 0 23.70 34.95L23.70 38.80L16.30 38.80L16.30 34.95A2.85 2.85 0 0 0 12.05 33.19L9.32 35.91L4.09 30.68L6.81 27.95A2.85 2.85 0 0 0 5.05 23.70L1.20 23.70L1.20 16.30L5.05 16.30A2.85 2.85 0 0 0 6.81 12.05L4.09 9.32L9.32 4.09L12.05 6.81A2.85 2.85 0 0 0 16.30 5.05Z"></path><circle cx="20" cy="20" r="5.100" stroke="#7de2d1" stroke-width="2.400"></circle></svg>
<svg class="a" style="left:1201px;top:1186px" width="40" height="40" viewBox="0 0 40 40" fill="none" stroke="#eceff5" stroke-width="2.4" stroke-linejoin="miter"><path d="M16.30 5.05L16.30 1.20L23.70 1.20L23.70 5.05A2.85 2.85 0 0 0 27.95 6.81L30.68 4.09L35.91 9.32L33.19 12.05A2.85 2.85 0 0 0 34.95 16.30L38.80 16.30L38.80 23.70L34.95 23.70A2.85 2.85 0 0 0 33.19 27.95L35.91 30.68L30.68 35.91L27.95 33.19A2.85 2.85 0 0 0 23.70 34.95L23.70 38.80L16.30 38.80L16.30 34.95A2.85 2.85 0 0 0 12.05 33.19L9.32 35.91L4.09 30.68L6.81 27.95A2.85 2.85 0 0 0 5.05 23.70L1.20 23.70L1.20 16.30L5.05 16.30A2.85 2.85 0 0 0 6.81 12.05L4.09 9.32L9.32 4.09L12.05 6.81A2.85 2.85 0 0 0 16.30 5.05Z"></path><circle cx="20" cy="20" r="5.100" stroke="#7de2d1" stroke-width="2.400"></circle></svg>
<svg class="a" style="left:0;top:0;filter:drop-shadow(0 1.500px 2px rgba(0,0,0,.45))" width="1416" height="1376" viewBox="0 0 1416 1376"><path d="M285.0 1195.4 L318.1 1201.2 L309.9 1192.1 L806.5 1005.3 A4.2 4.2 0 0 0 803.5 997.5 L306.0 1181.6 L306.3 1171.0Z" fill="#f5594a" stroke="#f5594a" stroke-width="1" stroke-linejoin="round"></path></svg>

<!-- ============ bottom bar ============ -->
<div id="bottom" class="a"></div>
<div class="a" style="left:16px;top:1319.500px;width:112px;height:40px;border:1px solid #e9ebf0;border-radius:4px"></div>
<span class="t" style="left: 54.7px; top: 1330.2px; font-size: 16.5px; color: rgb(255, 255, 255); letter-spacing: -0.23px;">Back</span>
<span class="t" style="left: 162px; top: 1330.2px; font-size: 16.5px; color: rgb(255, 255, 255); letter-spacing: -0.17px;">Cancel</span>

<!-- ============ scrollbar ============ -->
<div id="sb" class="a"></div>
<div id="sbt" class="a"></div>


</body></html>
